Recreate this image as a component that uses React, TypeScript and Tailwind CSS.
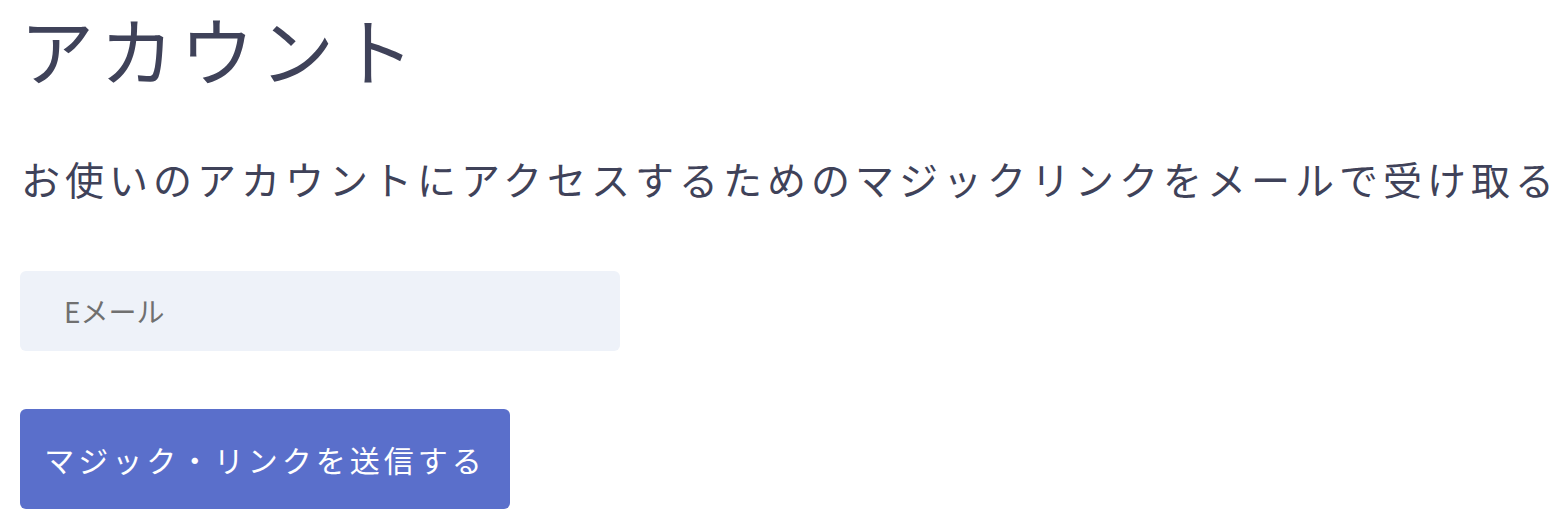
export default function App() {
  return (
    <div
      className="flex flex-col items-start px-5 bg-white text-[#3f4259]"
      style={{ fontFamily: '"Noto Sans CJK JP", "Noto Sans", sans-serif' }}
    >
      <h1 className="text-[74px] leading-[96px] font-normal tracking-[6px]">アカウント</h1>
      <p className="mt-[54px] pl-[1px] text-[39px] leading-[56px] tracking-[5px] whitespace-nowrap">
        お使いのアカウントにアクセスするためのマジックリンクをメールで受け取る
      </p>
      <input
        type="email"
        placeholder="Eメール"
        className="mt-[65px] w-[600px] h-[80px] rounded-md bg-[#eef2f9] pl-[44px] pr-8 text-[28px] placeholder:text-[#707070] outline-none"
      />
      <button className="mt-[58px] w-[490px] h-[100px] rounded-md bg-[#5a6fcb] text-[30px] tracking-[4px] text-white">
        マジック・リンクを送信する
      </button>
    </div>
  )
}
